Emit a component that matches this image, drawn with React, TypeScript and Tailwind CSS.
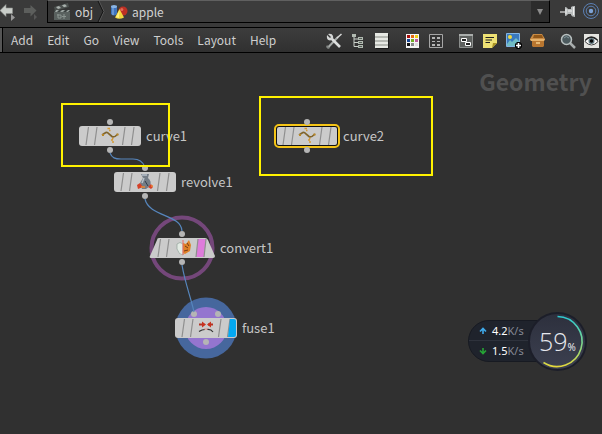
import type { ReactNode } from "react";

const UI_FONT = "font-['Noto_Sans_CJK_SC','Noto_Sans',sans-serif]";

function Icon({ children }: { children: ReactNode }) {
  return (
    <svg viewBox="0 0 16 16" className="block size-4" aria-hidden="true">
      {children}
    </svg>
  );
}

function ToolButton({ label, children }: { label: string; children: ReactNode }) {
  return (
    <button type="button" aria-label={label} className="block size-4 shrink-0">
      <Icon>{children}</Icon>
    </button>
  );
}

function TopBar() {
  return (
    <header className="flex h-[27px] items-start bg-[#3a3a3a]">
      <nav aria-label="History" className="flex w-[47px] shrink-0 items-center">
        <button type="button" aria-label="Back" className="block">
          <svg viewBox="0 0 20 22" className="block h-[22px] w-5" aria-hidden="true">
            <path d="M0 10.500 L6 4.500 V8 H12.500 V13.500 H6 V16.500 Z" fill="#c9cdc9" stroke="#8d918d" strokeWidth=".6" />
            <path d="M11 14 L15 17.500 L11 21 Z" fill="#999" />
          </svg>
        </button>
        <button type="button" aria-label="Forward" className="block">
          <svg viewBox="0 0 20 22" className="block h-[22px] w-5" aria-hidden="true">
            <path d="M16.500 10.500 L10.500 5 V8 H4 V13 H10.500 V16.500 Z" fill="#5c5e5c" />
            <path d="M14 14 L17 17 L14 20 Z" fill="#565656" />
          </svg>
        </button>
      </nav>
      <div className="flex h-[23px] min-w-0 flex-1 items-stretch border-x border-b border-t border-x-black border-b-black border-t-[#606060] bg-[#3c3c3c]">
        <button type="button" className="flex items-center gap-1 bg-[#343434] pl-[5px] pr-1 text-[12px] leading-[20px] text-[#d2d2d2]">
          <svg viewBox="0 0 18 18" className="size-[18px]" aria-hidden="true">
            <path d="M1 4 L15 0 L16 4 L2 8 Z" fill="#4b504e" />
            <path d="M3 4 l3 -1 2 2 -3 1z M9 2.200 l3 -1 2 2 -3 1z" fill="#a9b0ad" />
            <rect x="1" y="7" width="16" height="10" fill="#59615f" />
            <path d="M1 7h16v2H1z" fill="#3c4342" />
            <path d="M3 7h3l-2 2H2z M9 7h3l-2 2H7z M15 7h2l-2 2h-2z" fill="#9aa3a0" />
            <path d="M5 11v4M4 12h4v3H5M11 11v5M9 13.500h4" stroke="#8b9591" fill="none" />
          </svg>
          obj
        </button>
        <svg viewBox="0 0 10 21" className="h-full w-[10px] shrink-0" preserveAspectRatio="none" aria-hidden="true">
          <path d="M0 0 H1 L6 10.500 L1 21 H0 Z" fill="#343434" />
          <path d="M2 0 L7 10.500 L2 21" fill="none" stroke="#5a5a5a" />
          <path d="M1 0 L6 10.500 L1 21" fill="none" stroke="#151515" />
        </svg>
        <button type="button" className="flex items-center gap-1 pl-[3px] text-[12px] leading-[20px] text-[#d2d2d2]">
          <svg viewBox="0 0 18 16" className="h-4 w-[18px]" aria-hidden="true">
            <path d="M1 2 V10 Q4 13 7 10 V2 Z" fill="#3f74bd" />
            <path d="M3 3v8" stroke="#90b6e5" />
            <ellipse cx="4" cy="2.500" rx="3" ry="1.500" fill="#8ab4e4" />
            <circle cx="13" cy="7" r="4.500" fill="#bd3024" />
            <circle cx="11.800" cy="5.500" r="1.500" fill="#e16a56" />
            <path d="M9.500 5 L14 13.500 Q9 16 5 13.500 Z" fill="#f3d73c" />
            <path d="M9.500 6 L9 14 L6 13 Z" fill="#fff07c" />
          </svg>
          apple
        </button>
        <span className="flex-1" />
        <button type="button" aria-label="Path history" className="flex w-[18px] items-center justify-center bg-[#2c2c2c]">
          <svg viewBox="0 0 8 6" className="h-[6px] w-2" aria-hidden="true">
            <path d="M1 0h6L4 6z" fill="#8c8c8c" />
          </svg>
        </button>
      </div>
      <div className="flex w-[52px] shrink-0 items-center gap-[6px] pl-2.5 pt-[2px]">
        <ToolButton label="Pin">
          <path d="M0 9 H6" stroke="#dedede" strokeWidth="1.200" />
          <path d="M5 4 Q7 4 8 6 H11 V4 Q12 3 15 3 V14 Q12 14 11 12 V11 H8 Q7 13 5 13 Z" fill="#b9bdbd" />
          <path d="M8 8h4M6 6v5M13.500 4v8" stroke="#f0f0f0" />
        </ToolButton>
        <button type="button" aria-label="Follow selection" className="block shrink-0">
          <svg viewBox="0 0 18 18" className="block size-[18px]" aria-hidden="true">
            <g fill="none" stroke="#5b80b4">
              <circle cx="9" cy="9" r="7.500" />
              <circle cx="9" cy="9" r="4.800" />
            </g>
            <circle cx="9" cy="9" r="2.200" fill="#7ea3d6" />
          </svg>
        </button>
      </div>
    </header>
  );
}

const menus = ["Add", "Edit", "Go", "View", "Tools", "Layout", "Help"];
const swatches = ["#a80d0d", "#e56a10", "#f0cf13", "#154391", "#72ae24", "#bd5b9c", "#111", "#888", "#ddd"];

function MenuBar() {
  return (
    <div className="flex h-[26px] border-y border-black bg-[#3a3a3a]">
      <div className="w-[3px] shrink-0 border-r border-black bg-[#555]" />
      <div className="flex min-w-0 flex-1 items-center justify-between bg-linear-to-b from-[#3d3d3d] to-[#303030] pl-2 pr-[2px]">
        <nav aria-label="Network menu" className="flex items-center gap-3.5">
          {menus.map((m) => (
            <button key={m} type="button" className="text-[12px] leading-[20px] text-[#cecece]">
              {m}
            </button>
          ))}
        </nav>
        <div className="flex shrink-0 items-center gap-3.5 pt-[2px]">
          <div className="flex gap-2">
            <ToolButton label="Tools">
              <path d="M2 14.500 L12 4" stroke="#a9adab" strokeWidth="2" />
              <path d="M11 5 L15.500 1" stroke="#d8dad9" strokeWidth="1.500" />
              <path d="M5 5 L14 14" stroke="#dcdedd" strokeWidth="2.600" />
              <path d="M2 1 L5 4 L4 5 L1 2 Q0 7 4 7.500 Q8 7 7 3 Q6 0 2 1Z" fill="#d4d6d5" />
              <path d="M1 12l3 3-2 1-2-2z" fill="#818583" />
            </ToolButton>
            <ToolButton label="Tree view">
              <path d="M4 2V13.500H9M4 6H9M4 9.500H9" fill="none" stroke="#c9cfc9" />
              <path d="M2 1h4v3H2zM8 4h5v3H8zM8 8h5v3H8zM8 12h5v3H8z" fill="#b1bab1" />
              <path d="M9 5h3v1H9zM9 9h3v1H9zM9 13h3v1H9z" fill="#555d57" />
            </ToolButton>
            <ToolButton label="List view">
              <path d="M2 1h13v15H2z" fill="#1c1c1c" />
              <path d="M1 0h13v15H1z" fill="#e7e9e4" />
              <path d="M1 3h13v2H1zM1 7h13v2H1zM1 11h13v2H1z" fill="#b6b9b3" />
            </ToolButton>
          </div>
          <div className="flex gap-2">
            <ToolButton label="Color palette">
              <path d="M2 1h13v14H2z" fill="#f5f5f5" />
              {swatches.map((c, i) => (
                <rect key={c} x={3 + (i % 3) * 4} y={2 + Math.floor(i / 3) * 4} width="3" height="3" fill={c} />
              ))}
            </ToolButton>
            <ToolButton label="Shape palette">
              <path d="M1.500 1.500h13v13h-13z" fill="#343434" stroke="#a6a6a6" />
              <path d="M4 4h3v2H4zM9 4h3v2H9zM4 8h3v1H4zM9 8h3v1H9zM4 11h3v2H4zM9 11h3v2H9z" fill="#b5b5b5" />
            </ToolButton>
          </div>
          <div className="flex gap-2">
            <ToolButton label="Network boxes">
              <path d="M1.500 1.500h13v13h-13z" fill="#5d605e" stroke="#8b8e8c" />
              <path d="M1 1h14v2H1z" fill="#aaadab" />
              <path d="M3.500 5.500h5v3h-5zM7.500 9.500h5v3h-5z" fill="#222" stroke="#fff" />
            </ToolButton>
            <ToolButton label="Sticky note">
              <path d="M1 1h14v9l-5 5H1z" fill="#eee174" />
              <path d="M15 10h-4l-1 5z" fill="#a99324" />
              <path d="M3.500 4.500H12M3.500 7H10M3.500 9.500H8" stroke="#222" strokeWidth="1.200" />
            </ToolButton>
            <ToolButton label="Background image">
              <path d="M.5.500h13v13H.5z" fill="#3978bd" stroke="#82b4e3" />
              <path d="M1 11l3-4 2 2 4-4 3 3v5H1z" fill="#70bcc5" />
              <circle cx="4" cy="4" r="2" fill="#f2d83d" />
              <path d="M9 12.500h7M12.500 9v7" stroke="#000" strokeWidth="4" />
              <path d="M10 12.500h5M12.500 10v5" stroke="#fff" strokeWidth="1.600" />
            </ToolButton>
            <ToolButton label="Assets">
              <path d="M3 1h9l3 5-1 2H1L0 6z" fill="#c88a43" />
              <path d="M4 2h8l1 3H3z" fill="#915718" />
              <path d="M2 8h12v5l-1 1H3l-1-1z" fill="#b87630" />
              <path d="M0 6h15l-1 2H1z" fill="#e7b36c" />
              <path d="M6 9h4v2H6z" fill="#e5b873" />
            </ToolButton>
          </div>
          <div className="flex gap-2">
            <ToolButton label="Find">
              <path d="M10 10l5 5" stroke="#a7acac" strokeWidth="2.500" />
              <circle cx="6.500" cy="6.500" r="5" fill="#4c5a5e" stroke="#b8c0c0" strokeWidth="1.500" />
              <path d="M4 5q2-3 5 0" fill="none" stroke="#81959b" />
            </ToolButton>
            <ToolButton label="Display options">
              <path d="M0 1h15v14H0z" fill="#e5e5e1" />
              <path d="M1 8.500Q3 4 7.500 4Q12 4 14 8.500Q11 12 7.500 12Q4 12 1 8.500Z" fill="#f7f7f7" stroke="#444" />
              <path d="M1.500 7Q7 1.500 13.500 7" fill="none" stroke="#222" strokeWidth="1.400" />
              <circle cx="7.500" cy="8" r="3" fill="#60777e" />
              <circle cx="7.500" cy="8" r="1.700" fill="#050505" />
            </ToolButton>
          </div>
        </div>
      </div>
    </div>
  );
}

function CurveGlyph() {
  return (
    <g>
      <path d="M23 9L26 7Q28 5.500 30 8L33 10.500Q35 12 39 8" fill="none" stroke="#80652c" strokeWidth="1.700" />
      <path d="M28.500 2.500h2.500M30 4.500h1.500M33 12.500h1.500M32 14h2M33 16h2" stroke="#d59a35" strokeWidth="1.400" />
      <path d="M23 9h2M37.500 8.500h2" stroke="#b98726" strokeWidth="2" />
    </g>
  );
}

function RevolveGlyph() {
  return (
    <g>
      <path d="M27 2h8l-1 4q4 3 2 8l-4 3h-4l-2-6 3-5z" fill="#747d87" />
      <path d="M28 3h5M30 6l-2 5" stroke="#b7c0ca" strokeWidth="1.500" />
      <path d="M23 13l3-2 3 4-5 2zM34 15l3-3 2 3-2 2z" fill="#d44129" />
      <path d="M27 15h4M37 14h2" stroke="#e88735" strokeWidth="1.500" />
      <path d="M31 9l3 5" stroke="#303c4b" />
    </g>
  );
}

function ConvertGlyph() {
  return (
    <g>
      <path d="M26 6q3-3 6 0v11q-4 0-6-6z" fill="#e3ebe4" stroke="#91a19a" strokeWidth=".7" />
      <path d="M32 5l3 1 3-4 2 5-1 6-5 3-2-1z" fill="#df8128" />
      <path d="M34 8l3 2M36 5l2 3M33 13l4-1" stroke="#783c15" />
      <path d="M32 2v15" stroke="#ee6864" />
    </g>
  );
}

function FuseGlyph() {
  return (
    <g>
      <path d="M24 6.500h5M38 6.500h-5" stroke="#b33223" strokeWidth="2" />
      <path d="M27 3.500l4 3-4 3zM36 3.500l-4 3 4 3z" fill="#c9321f" />
      <path d="M24 13.500q3-2 6-2M38 14q-2-3-6-2.500" fill="none" stroke="#333" strokeWidth="1.200" />
      <path d="M29 11h4" stroke="#e18d85" />
    </g>
  );
}

const Stripes = () => (
  <path d="M9.500 1L7 19M18 1L15.500 19M46 1L43.500 19M55 1L52.500 19" stroke="#8f8f8f" strokeWidth="1.200" />
);

type NodeProps = {
  name: string;
  place: string;
  back?: ReactNode;
  body?: ReactNode;
  glyph: ReactNode;
  dots?: [number, number][];
};

const plainBody = (
  <>
    <rect x="0" y="0" width="62" height="20" rx="3" fill="#cbcbcb" />
    <Stripes />
  </>
);

function GraphNode({ name, place, back, body = plainBody, glyph, dots = [[31, -4], [31, 24]] }: NodeProps) {
  return (
    <div className={`absolute flex h-5 items-center gap-[5px] ${place}`}>
      <svg viewBox="0 0 62 20" className="block h-5 w-[62px] shrink-0 overflow-visible" aria-hidden="true">
        {back}
        {body}
        {glyph}
        {dots.map(([x, y]) => (
          <circle key={`${x},${y}`} cx={x} cy={y} r="3" fill="#b5b5b5" />
        ))}
      </svg>
      <span className="text-[13px] leading-5 text-[#c6c6c6]">{name}</span>
    </div>
  );
}

function NetworkCanvas() {
  return (
    <main className="relative flex-1 overflow-hidden bg-[#303030]">
      <h1 className="absolute right-2.5 top-[12px] text-[23px] font-bold leading-8 text-[#505050]">Geometry</h1>

      <GraphNode name="curve1" place="left-[79px] top-[73px]" glyph={<CurveGlyph />} />
      <GraphNode name="revolve1" place="left-[114px] top-[119px]" glyph={<RevolveGlyph />} />
      <GraphNode
        name="curve2"
        place="left-[276px] top-[73px]"
        glyph={<CurveGlyph />}
        body={
          <>
            <rect x="-1" y="-1" width="64" height="22" rx="4" fill="#111" stroke="#f5c416" strokeWidth="2" />
            <rect x="1" y="1" width="60" height="18" rx="2" fill="#cbcbcb" />
            <Stripes />
          </>
        }
      />
      <GraphNode
        name="convert1"
        place="left-[151px] top-[185px] [&>span]:ml-[2px]"
        glyph={<ConvertGlyph />}
        back={<circle cx="31" cy="10" r="30.500" fill="none" stroke="#74477a" strokeWidth="4" />}
        body={
          <>
            <path d="M8 0H54Q56 0 57 2L64 18Q64 20 62 20H0Q-2 20-1 18L6 2Q6 0 8 0Z" fill="#cbcbcb" />
            <path d="M47 1h8l-2 18h-8z" fill="#de7bdb" />
            <path d="M9.500 1L7 19M18 1L15.500 19M47 1L45 19M55 1L53 19" stroke="#8f8f8f" strokeWidth="1.200" />
          </>
        }
      />
      <GraphNode
        name="fuse1"
        place="left-[175px] top-[265px]"
        glyph={<FuseGlyph />}
        dots={[[19, -4], [43, -4], [31, 24]]}
        back={
          <>
            <circle cx="31" cy="10" r="30.500" fill="#46679d" />
            <circle cx="31" cy="10" r="21" fill="#9475cf" />
          </>
        }
        body={
          <>
            {plainBody}
            <path d="M55 1h4q2 0 2 2v14q0 2-2 2h-6z" fill="#04a8f2" />
          </>
        }
      />

      <svg className="pointer-events-none absolute inset-0 size-full" aria-hidden="true">
        <g fill="none" stroke="#5686bd" strokeWidth="1.200">
          <path d="M110 100C112 105 115 106 121 106H133C140 106 143 109 145 114" />
          <path d="M145 146C149 164 181 161 182 178" />
          <path d="M182 212C185 230 191 245 194 259" />
        </g>
      </svg>

      <div className="absolute left-[61px] top-[50px] h-16 w-[109px] border-2 border-[#fff200]" />
      <div className="absolute left-[259px] top-[43px] h-20 w-[174px] border-2 border-[#fff200]" />

      <SpeedWidget />
    </main>
  );
}

function SpeedRow({ up, value }: { up?: boolean; value: string }) {
  return (
    <div className="flex h-5 items-center gap-[5px] pl-2.5">
      <svg viewBox="0 0 8 8" className="size-2" aria-hidden="true">
        {up ? (
          <path d="M4 7V2M1 4.500L4 1.500L7 4.500" fill="none" stroke="#3fa9ea" strokeWidth="1.600" />
        ) : (
          <path d="M4 1V6M1 3.500L4 6.500L7 3.500" fill="none" stroke="#25a536" strokeWidth="1.600" />
        )}
      </svg>
      <span className="text-[11px] leading-5 text-white">
        {value}
        <span className="text-[#858994]">K/s</span>
      </span>
    </div>
  );
}

function SpeedWidget() {
  return (
    <section aria-label="System monitor" className="absolute right-[15px] top-[258px] flex h-[60px] items-center font-['Noto_Sans',sans-serif]">
      <div className="-mr-[14px] h-[42px] w-[74px] divide-y divide-[#2e323c] rounded-l-full border border-[#171a22] bg-[#1f232c]">
        <SpeedRow up value="4.2" />
        <SpeedRow value="1.5" />
      </div>
      <div className="relative flex size-[59px] items-center justify-center rounded-full border-2 border-[#1c1e29] bg-linear-to-b from-[#2d303d] to-[#3c4050]">
        <svg viewBox="0 0 59 59" className="absolute -left-[2px] -top-[2px] size-[59px]" aria-hidden="true">
          <defs>
            <linearGradient id="gauge" x1="0" y1="0" x2="0" y2="1">
              <stop offset="0" stopColor="#2dc8d0" />
              <stop offset=".55" stopColor="#7ed78c" />
              <stop offset="1" stopColor="#e4d83c" />
            </linearGradient>
          </defs>
          <path d="M29.500 4.500A25 25 0 1 1 15.500 50.500" fill="none" stroke="url(#gauge)" strokeWidth="1.600" />
        </svg>
        <div className="relative flex items-baseline text-[#e6e8ee]">
          <span className="font-['Open_Sans','Noto_Sans',sans-serif] text-[25px] font-light leading-8">59</span>
          <span className="text-[10px] leading-3">%</span>
        </div>
      </div>
    </section>
  );
}

export default function App() {
  return (
    <div className={`flex min-h-screen flex-col bg-[#303030] ${UI_FONT}`}>
      <TopBar />
      <MenuBar />
      <NetworkCanvas />
    </div>
  );
}
